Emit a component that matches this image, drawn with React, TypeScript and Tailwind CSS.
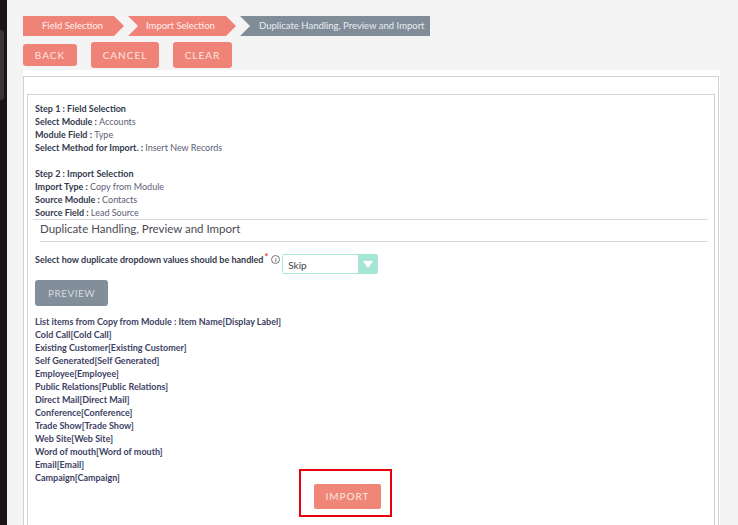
import React from 'react';

const coral = 'bg-[#f08377]';

const summary: [string, string][][] = [
  [
    ['Step 1 : Field Selection', ''],
    ['Select Module : ', 'Accounts'],
    ['Module Field : ', 'Type'],
    ['Select Method for Import. : ', 'Insert New Records'],
  ],
  [
    ['Step 2 : Import Selection', ''],
    ['Import Type : ', 'Copy from Module'],
    ['Source Module : ', 'Contacts'],
    ['Source Field : ', 'Lead Source'],
  ],
];

const items = [
  'List items from Copy from Module : Item Name[Display Label]',
  'Cold Call[Cold Call]',
  'Existing Customer[Existing Customer]',
  'Self Generated[Self Generated]',
  'Employee[Employee]',
  'Public Relations[Public Relations]',
  'Direct Mail[Direct Mail]',
  'Conference[Conference]',
  'Trade Show[Trade Show]',
  'Web Site[Web Site]',
  'Word of mouth[Word of mouth]',
  'Email[Email]',
  'Campaign[Campaign]',
];

function Crumbs() {
  return (
    <div className="flex h-[20px] items-stretch whitespace-nowrap text-[9.5px] text-[#fdf0ee]">
      <div className={`${coral} w-[101px] flex items-center pl-[19px] [clip-path:polygon(0_0,calc(100%-10px)_0,100%_50%,calc(100%-10px)_100%,0_100%)]`}>
        Field Selection
      </div>
      <div className={`${coral} ml-[4px] w-[108px] flex items-center pl-[18px] [clip-path:polygon(0_0,calc(100%-10px)_0,100%_50%,calc(100%-10px)_100%,0_100%,10px_50%)]`}>
        Import Selection
      </div>
      <div className="bg-[#808d99] ml-[4px] w-[190px] flex items-center pl-[19px] text-[#e8ecef] [clip-path:polygon(0_0,100%_0,100%_100%,0_100%,10px_50%)]">
        Duplicate Handling, Preview and Import
      </div>
    </div>
  );
}

function Btn({ label, w, cls = '' }: { label: string; w: string; cls?: string }) {
  return (
    <button className={`${coral} ${w} ${cls} rounded-[3px] text-[10px] tracking-[1px] text-[#fde6e2] flex items-center justify-center`}>
      {label}
    </button>
  );
}

export default function App() {
  return (
    <div className="flex h-[525px] w-full overflow-hidden font-['Lato','Liberation_Sans',sans-serif]">
      <div className="w-[7px] bg-[#1e1219] pt-[30px]">
        <div className="h-[70px] w-[4px] rounded-r-[3px] bg-[#3a3437]" />
      </div>
      <div className="flex-1 bg-[#f4f4f4] pl-[16px] pt-[16px]">
        <Crumbs />
        <div className="mt-[6px] flex h-[26px] items-center gap-[14px]">
          <Btn label="BACK" w="w-[54px]" cls="h-[22px]" />
          <Btn label="CANCEL" w="w-[68px]" cls="h-[26px]" />
          <Btn label="CLEAR" w="w-[59px]" cls="h-[26px]" />
        </div>
        <div className="mt-[2px] w-[697px] bg-white pt-[6px] h-[460px]">
          <div className="h-full w-[696px] border-l border-r border-t border-[#d2d2d2] pl-[3px] pr-[3px] pt-[17px]">
            <div className="h-full border-l border-r border-t border-[#d2d2d2] pl-[7px] pr-[6px] pt-[7px] text-[9px] leading-[13px]">
              {summary.map((block, bi) => (
                <div key={bi} className={bi ? 'mt-[13px]' : ''}>
                  {block.map(([k, v]) => (
                    <div key={k} className="text-[#333a4d]">
                      <span className="font-bold">{k}</span>
                      <span className="text-[#5c5d75]">{v}</span>
                    </div>
                  ))}
                </div>
              ))}
              <div className="ml-[-2px] border-t border-[#d8d8d8] pl-[7px] pt-[1px]">
                <div className="border-b border-[#d8d8d8] pb-[4px] text-[11.5px] leading-[16px] text-[#4a4a55]">
                  Duplicate Handling, Preview and Import
                </div>
              </div>
              <div className="mt-[12px] flex h-[20px] items-start">
                <span className="mt-[-1px] font-bold text-[#333a4d]">Select how duplicate dropdown values should be handled</span>
                <span className="mt-[-4px] ml-[1px] text-[9px] font-bold text-[#e0302a]">*</span>
                <span className="ml-[3px] mt-[1px] flex h-[9px] w-[9px] items-center justify-center rounded-full border border-[#777] text-[6px] font-bold leading-none text-[#555]">
                  i
                </span>
                <div className="ml-[2px] flex h-[20px] w-[96px] items-stretch rounded-[2px] border border-[#a6e6d4]">
                  <div className="flex flex-1 items-center bg-white pl-[5px] pt-[2px] text-[10px] text-[#444]">Skip</div>
                  <div className="flex w-[19px] items-center justify-center bg-[#a6e6d4]">
                    <svg width="10" height="7" viewBox="0 0 10 7">
                      <path d="M0 0 H10 L5 7 Z" fill="#ffffff" />
                    </svg>
                  </div>
                </div>
              </div>
              <button className="mt-[6px] flex h-[26px] w-[73px] items-center justify-center rounded-[3px] bg-[#828e9a] text-[10px] tracking-[0.5px] text-[#d5dade]">
                PREVIEW
              </button>
              <div className="mt-[9px] font-bold text-[#3d4263]">
                {items.map((t) => (
                  <div key={t}>{t}</div>
                ))}
              </div>
              <div className="ml-[264px] mt-[-15px] flex h-[48px] w-[93px] items-start border-2 border-[#e8000a] pl-[13px] pt-[13px]">
                <button className="flex h-[25px] w-[67px] items-center justify-center rounded-[2px] bg-[#f08678] text-[10px] tracking-[1px] text-[#fde6e2]">
                  IMPORT
                </button>
              </div>
            </div>
          </div>
        </div>
      </div>
    </div>
  );
}
